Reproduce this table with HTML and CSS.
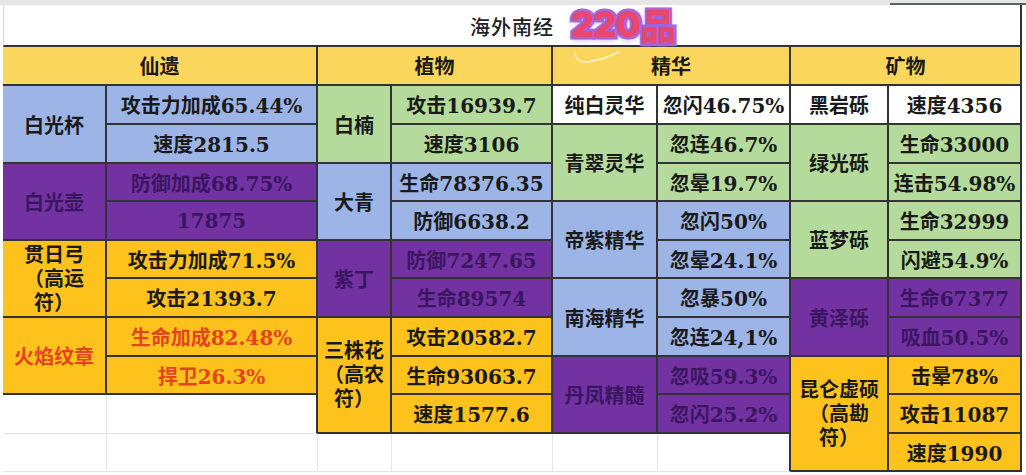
FILE: index.html
```html
<!DOCTYPE html>
<html lang="zh-CN">
<head>
<meta charset="utf-8">
<title>海外南经 220品</title>
<link rel="stylesheet" href="styles.css">
</head>
<body>
<div class="topbar"><div class="tb-fill"></div><div class="tb-dark"></div></div>
<div class="sheet">
  <div class="title">
    <span class="title-text">海外南经</span>
    <span class="badge"><span class="badge-num">220</span><span class="badge-cjk">品</span></span>
  </div>
  <div class="head">
    <div class="hcell">仙遗</div>
    <div class="hcell">植物</div>
    <div class="hcell">
      <svg class="squiggle" width="48" height="16" viewBox="0 0 48 16"><path d="M2 3 Q3 13 14 12 Q30 10 46 2" fill="none" stroke="#fff6d0" stroke-width="1.4" stroke-linecap="round"/></svg>
      精华
    </div>
    <div class="hcell">矿物</div>
  </div>
  <div class="grid">
    <!-- col 1 -->
    <div class="c blue s2">白光杯</div>
    <div class="c purple s2">白光壶</div>
    <div class="c gold s2 wrap"><span class="narrow">贯日弓（高运符）</span></div>
    <div class="c gold red s2">火焰纹章</div>
    <div class="c empty"></div>
    <div class="c empty"></div>
    <!-- col 2 -->
    <div class="c blue">攻击力加成65.44%</div>
    <div class="c blue">速度2815.5</div>
    <div class="c purple">防御加成68.75%</div>
    <div class="c purple">17875</div>
    <div class="c gold">攻击力加成71.5%</div>
    <div class="c gold">攻击21393.7</div>
    <div class="c gold red">生命加成82.48%</div>
    <div class="c gold red">捍卫26.3%</div>
    <div class="c empty edge"></div>
    <div class="c empty"></div>
    <!-- col 3 -->
    <div class="c green s2">白楠</div>
    <div class="c blue s2">大青</div>
    <div class="c purple s2">紫丁</div>
    <div class="c gold s3 wrap"><span>三株花（高农符）</span></div>
    <div class="c empty"></div>
    <!-- col 4 -->
    <div class="c green">攻击16939.7</div>
    <div class="c green">速度3106</div>
    <div class="c blue">生命78376.35</div>
    <div class="c blue">防御6638.2</div>
    <div class="c purple">防御7247.65</div>
    <div class="c purple">生命89574</div>
    <div class="c gold">攻击20582.7</div>
    <div class="c gold">生命93063.7</div>
    <div class="c gold">速度1577.6</div>
    <div class="c empty"></div>
    <!-- col 5 -->
    <div class="c white">纯白灵华</div>
    <div class="c green s2">青翠灵华</div>
    <div class="c blue s2">帝紫精华</div>
    <div class="c blue s2">南海精华</div>
    <div class="c purple s2">丹凤精髓</div>
    <div class="c empty"></div>
    <!-- col 6 -->
    <div class="c white">忽闪46.75%</div>
    <div class="c green">忽连46.7%</div>
    <div class="c green">忽晕19.7%</div>
    <div class="c blue">忽闪50%</div>
    <div class="c blue">忽晕24.1%</div>
    <div class="c blue">忽暴50%</div>
    <div class="c blue">忽连24,1%</div>
    <div class="c purple">忽吸59.3%</div>
    <div class="c purple">忽闪25.2%</div>
    <div class="c empty edge"></div>
    <!-- col 7 -->
    <div class="c white">黑岩砾</div>
    <div class="c green s2">绿光砾</div>
    <div class="c green s2">蓝梦砾</div>
    <div class="c purple s2">黄泽砾</div>
    <div class="c gold s3 wrap"><span class="mid">昆仑虚硕（高勘符）</span></div>
    <!-- col 8 -->
    <div class="c white">速度4356</div>
    <div class="c green">生命33000</div>
    <div class="c green">连击54.98%</div>
    <div class="c green">生命32999</div>
    <div class="c green">闪避54.9%</div>
    <div class="c purple">生命67377</div>
    <div class="c purple">吸血50.5%</div>
    <div class="c gold">击晕78%</div>
    <div class="c gold">攻击11087</div>
    <div class="c gold">速度1990</div>
  </div>
</div>
</body>
</html>
```
FILE: styles.css
```css
html, body {
  margin: 0;
  padding: 0;
  background: #ffffff;
}

body {
  font-family: "DejaVu Serif", "Noto Sans CJK SC", serif;
  color: #1a1a1a;
  text-spacing-trim: space-all;
}

.topbar {
  display: flex;
  height: 5px;
}

.tb-fill {
  flex: 1;
  background: #e6e6e6;
}

.tb-dark {
  width: 136px;
  height: 3px;
  background: #e6e6e6;
  border-bottom: 2px solid #5a665d;
}

.sheet {
  margin-left: 3px;
  width: 1019px;
}

.title {
  position: relative;
  box-sizing: border-box;
  height: 42px;
  border-left: 1px solid #d6d6d6;
  border-right: 2px solid #333333;
  border-bottom: 2px solid #333333;
  display: flex;
  align-items: center;
  justify-content: center;
  background: #ffffff;
}

.title-text {
  font-family: "Noto Sans CJK SC", sans-serif;
  font-size: 20px;
  font-weight: 500;
  letter-spacing: 1px;
  color: #222222;
  padding-top: 2px;
}

.badge {
  position: absolute;
  left: 567px;
  top: 1px;
  height: 36px;
  display: flex;
  align-items: center;
  font-size: 36px;
  line-height: 36px;
  color: #ea4770;
  -webkit-text-stroke: 5px #a66ad9;
  paint-order: stroke fill;
  text-shadow: 0 2px 6px rgba(150, 90, 220, 0.65);
  white-space: nowrap;
}

.badge-num {
  font-family: "Inter", sans-serif;
  font-weight: 900;
  letter-spacing: -1px;
}

.badge-cjk {
  font-family: "Noto Sans CJK SC", sans-serif;
  font-weight: 900;
  line-height: 36px;
}

.head {
  display: grid;
  grid-template-columns: 315px 235px 238px 231px;
  height: 39px;
}

.hcell {
  position: relative;
  box-sizing: border-box;
  background: #fbd65c;
  border-right: 2px solid #333333;
  border-bottom: 2px solid #333333;
  display: flex;
  align-items: center;
  justify-content: center;
  font-family: "Noto Sans CJK SC", sans-serif;
  font-size: 20px;
  font-weight: 700;
  color: #1a1a1a;
}

.squiggle {
  position: absolute;
  left: 20px;
  top: 3px;
}

.grid {
  display: grid;
  grid-template-columns: 104px 211px 74px 161px 105px 133px 98px 133px;
  grid-template-rows: 39px 39px 38px 39px 38px 39px 39px 38px 39px 38px;
  grid-auto-flow: column;
}

.c {
  box-sizing: border-box;
  border-right: 2px solid #333333;
  border-bottom: 2px solid #333333;
  display: flex;
  align-items: center;
  justify-content: center;
  text-align: center;
  font-size: 20px;
  font-weight: 700;
  white-space: nowrap;
  color: #1a1a1a;
}

.s2 { grid-row: span 2; }
.s3 { grid-row: span 3; }

.wrap {
  white-space: normal;
  line-height: 24px;
}

.narrow {
  display: block;
  max-width: 64px;
}

.mid {
  display: block;
  max-width: 86px;
}

.blue { background: #9db4e6; }
.green { background: #b4db9b; }
.purple { background: #7232a2; color: #3b1660; }
.gold { background: #fdc31c; }
.white { background: #ffffff; }
.red { color: #e4441d; }

.empty {
  background: #ffffff;
  border-right: 1px solid #e4e4e4;
  border-bottom: 1px solid #e4e4e4;
}

.empty.edge {
  border-right: 2px solid #333333;
}
```
